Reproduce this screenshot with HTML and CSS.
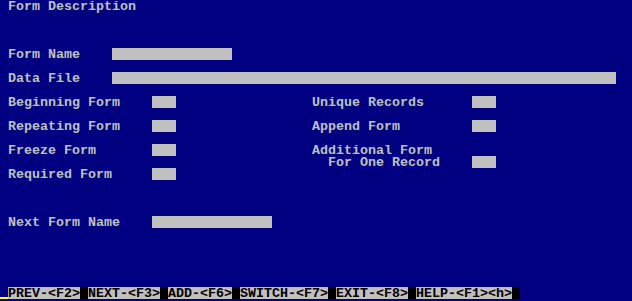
FILE: index.html
```html
<!DOCTYPE html>
<html lang="en">
<head>
  <meta charset="UTF-8">
  <title>Form Description</title>
  <link rel="stylesheet" href="styles.css">
</head>
<body>

  <div class="screen">
    <div class="line title">Form Description</div>

    <div class="field top-fields">
      <span class="label wide">Form Name</span>
      <span class="box name-box"></span>
    </div>
    <div class="field">
      <span class="label wide">Data File</span>
      <span class="box file-box"></span>
    </div>

    <div class="options">
      <span class="label">Beginning Form</span>
      <span class="box small"></span>
      <span class="label right">Unique Records</span>
      <span class="box small"></span>

      <span class="label">Repeating Form</span>
      <span class="box small"></span>
      <span class="label right">Append Form</span>
      <span class="box small"></span>

      <span class="label">Freeze Form</span>
      <span class="box small"></span>
      <span class="right two-line"><span class="label">Additional Form</span><span class="label">  For One Record</span></span>
      <span class="box small low"></span>

      <span class="label">Required Form</span>
      <span class="box small"></span>
    </div>

    <div class="field next-form">
      <span class="label">Next Form Name</span>
      <span class="box name-box"></span>
    </div>

    <div class="status-bar">
      <span class="cursor"></span>
      <span class="key">PREV-&lt;F2&gt;</span><span class="gap"></span>
      <span class="key">NEXT-&lt;F3&gt;</span><span class="gap"></span>
      <span class="key">ADD-&lt;F6&gt;</span><span class="gap"></span>
      <span class="key">SWITCH-&lt;F7&gt;</span><span class="gap"></span>
      <span class="key">EXIT-&lt;F8&gt;</span><span class="gap"></span>
      <span class="key">HELP-&lt;F1&gt;&lt;h&gt;</span><span class="gap"></span>
    </div>
  </div>

</body>
</html>
```

FILE: styles.css
```css
* {
  box-sizing: border-box;
  margin: 0;
  padding: 0;
}

body {
  background-color: #000080;
}

/* 80x25 text screen, every cell 8x12 */
.screen {
  width: 632px;
  height: 301px;
  display: flex;
  flex-direction: column;
  background-color: #000080;
  color: #c0c0c0;
  font-family: "Liberation Mono", monospace;
  font-weight: bold;
  font-size: 13.333px;
  line-height: 14px;
  white-space: pre;
}

.line,
.field {
  height: 12px;
  padding-left: 8px;
}

.line {
  padding-top: 1px;
  line-height: 12px;
}

.field {
  display: flex;
  margin-bottom: 12px;
}

.top-fields {
  margin-top: 36px;
}

.label {
  display: block;
  height: 12px;
}

.wide {
  width: 104px;
}

.box {
  display: block;
  height: 12px;
  background-color: #c0c0c0;
}

.name-box {
  width: 120px;
}

.file-box {
  width: 504px;
}

.small {
  width: 24px;
}

.options {
  display: grid;
  grid-template-columns: 144px 24px 296px 24px;
  grid-auto-rows: 24px;
  padding-left: 8px;
}

.right {
  margin-left: 136px;
  width: 160px;
}

.two-line {
  display: block;
  height: 24px;
}

.low {
  margin-top: 12px;
}

.next-form {
  margin-top: 24px;
}

.next-form .label {
  width: 144px;
}

.status-bar {
  margin-top: auto;
  margin-bottom: 2px;
  display: flex;
  height: 12px;
}

.cursor {
  width: 8px;
  height: 12px;
  border-bottom: 2px solid #ffff00;
  margin-bottom: -1px;
}

.key {
  background-color: #c0c0c0;
  color: #000000;
  height: 12px;
  line-height: 13px;
}

.gap {
  width: 8px;
  height: 12px;
  background-color: #000000;
}
```
